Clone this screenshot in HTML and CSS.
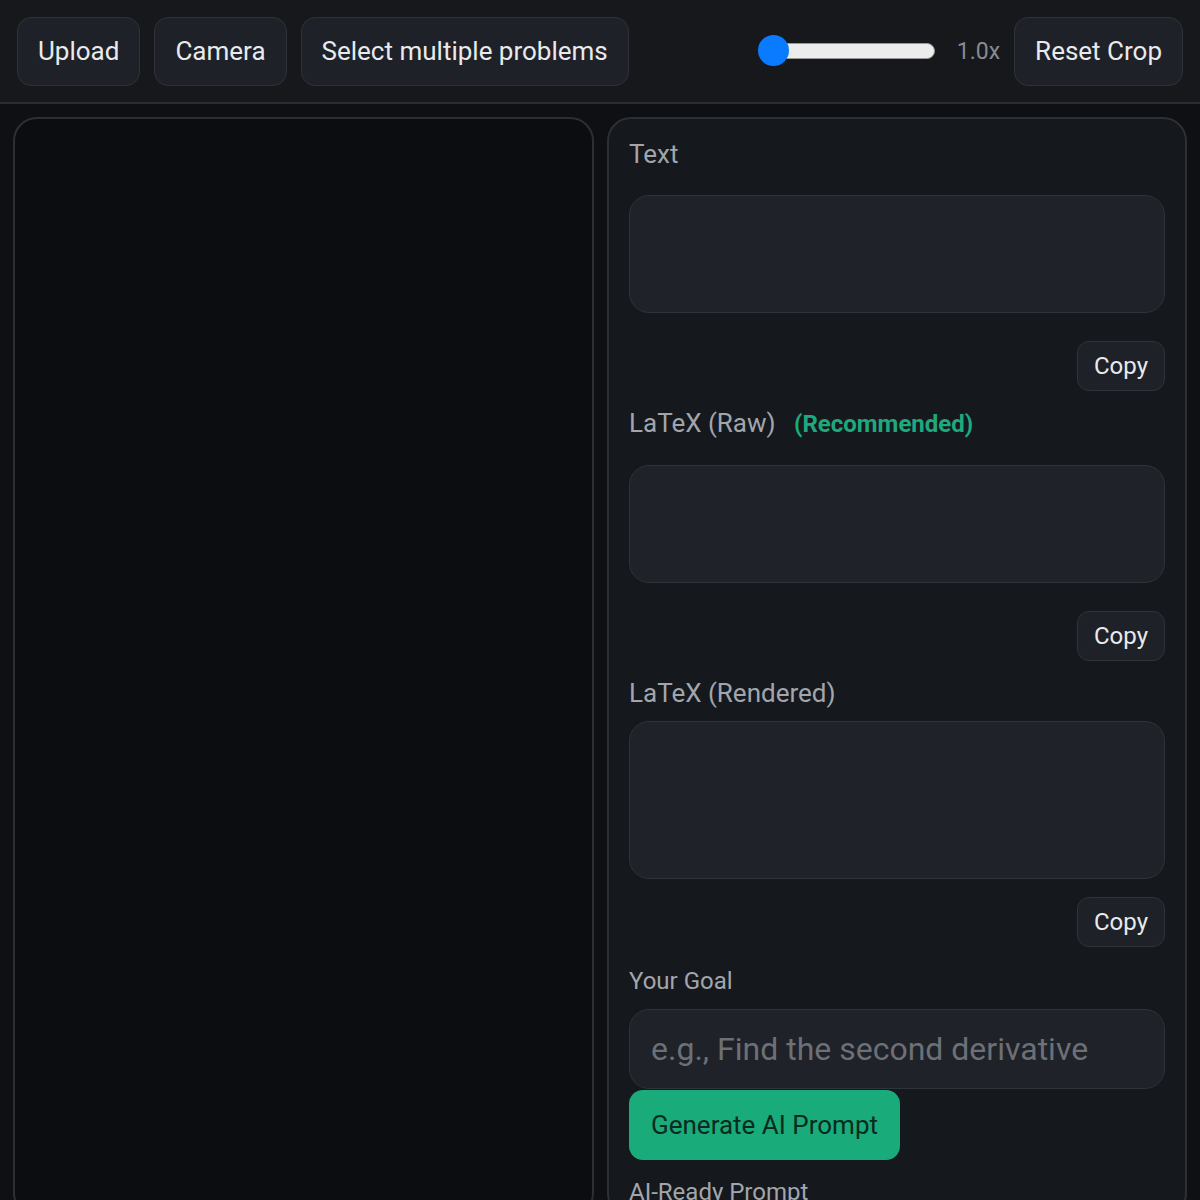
FILE: index.html
```html
<!DOCTYPE html>
<html>
<head>
<meta charset="utf-8">
<link rel="stylesheet" href="styles.css">
</head>
<body>
<header class="toolbar">
  <button class="btn">Upload</button>
  <button class="btn">Camera</button>
  <button class="btn">Select multiple problems</button>
  <div class="spacer"></div>
  <div class="zoom">
    <div class="slider"><div class="thumb"></div></div>
    <span class="zoom-val">1.0x</span>
  </div>
  <button class="btn">Reset Crop</button>
</header>
<main class="layout">
  <section class="canvas-panel"></section>
  <section class="side-panel">
    <div class="label big first">Text</div>
    <div class="box short"></div>
    <div class="copy-row"><button class="copy">Copy</button></div>
    <div class="label big first">LaTeX (Raw) <span class="rec">(Recommended)</span></div>
    <div class="box short"></div>
    <div class="copy-row"><button class="copy">Copy</button></div>
    <div class="label big">LaTeX (Rendered)</div>
    <div class="box tall"></div>
    <div class="copy-row tight"><button class="copy">Copy</button></div>
    <div class="label goal">Your Goal</div>
    <div class="input">e.g., Find the second derivative</div>
    <div class="gen-row"><button class="gen">Generate AI Prompt</button></div>
    <div class="label ready">AI-Ready Prompt</div>
  </section>
</main>
</body>
</html>
```
FILE: styles.css
```css
* { box-sizing: border-box; }
html, body { margin: 0; padding: 0; }
body {
  background: #0e1013;
  font-family: Roboto, "Noto Sans", sans-serif;
  color: #e6e8eb;
  height: 1200px;
  overflow: hidden;
}
.toolbar {
  display: flex;
  align-items: center;
  gap: 14px;
  height: 104px;
  padding: 0 17px;
  background: #16181c;
  border-bottom: 2px solid #2a2d32;
}
.btn {
  font-family: inherit;
  font-size: 26px;
  color: #e8eaed;
  background: #1e2127;
  border: 1.5px solid #2f3238;
  border-radius: 14px;
  height: 69px;
  padding: 0 20px;
}
.spacer { flex: 1; }
.zoom { display: flex; align-items: center; gap: 22px; }
.slider {
  position: relative;
  width: 174px;
  height: 16px;
  background: #ececec;
  border: 1.5px solid #9a9a9a;
  border-radius: 8px;
}
.thumb {
  position: absolute;
  left: -4px;
  top: -9px;
  width: 31px;
  height: 31px;
  border-radius: 50%;
  background: #0a7aff;
}
.zoom-val { font-size: 23px; color: #868a91; }
.layout {
  display: flex;
  gap: 13px;
  padding: 13px 13px 0 13px;
}
.canvas-panel {
  width: 581px;
  height: 1100px;
  background: #0b0d10;
  border: 2px solid #2c2f35;
  border-radius: 24px;
}
.side-panel {
  flex: 1;
  height: 1100px;
  background: #15181c;
  border: 2px solid #2c2f35;
  border-radius: 24px;
  padding: 21px 20px 0 20px;
  display: flex;
  flex-direction: column;
  overflow: hidden;
}
.label {
  font-size: 24px;
  line-height: 28px;
  color: #a2a6ac;
  margin-bottom: 14px;
  flex: none;
}
.label.big { font-size: 26px; }
.label.first { margin-bottom: 27px; }
.rec { color: #1ea97c; font-weight: 700; font-size: 24px; margin-left: 12px; }
.box {
  flex: none;
  background: #1f2228;
  border: 1.5px solid #30333a;
  border-radius: 20px;
}
.box.short { height: 118px; }
.box.tall { height: 158px; }
.copy-row {
  display: flex;
  justify-content: flex-end;
  margin: 28px 0 18px;
  flex: none;
}
.copy-row.tight { margin-top: 18px; margin-bottom: 20px; }
.copy {
  font-family: inherit;
  font-size: 24px;
  color: #e8eaed;
  background: #1e2127;
  border: 1.5px solid #30333a;
  border-radius: 12px;
  height: 50px;
  padding: 0 16px;
}
.input {
  flex: none;
  height: 80px;
  background: #1f2228;
  border: 1.5px solid #30333a;
  border-radius: 20px;
  font-size: 32px;
  color: #6c7077;
  padding: 0 21px;
  display: flex;
  align-items: center;
}
.gen-row { display: flex; margin-top: 1px; flex: none; }
.gen {
  font-family: inherit;
  font-size: 26px;
  color: #0b2a1e;
  background: #1aab7a;
  border: none;
  border-radius: 14px;
  height: 70px;
  padding: 0 22px;
}
.label.ready { margin-top: 18px; }
```
